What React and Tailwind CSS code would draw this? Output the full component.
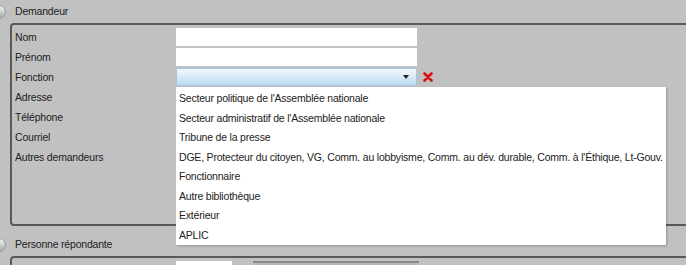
import React from "react";

const labels = ["Nom", "Prénom", "Fonction", "Adresse", "Téléphone", "Courriel", "Autres demandeurs"];

const options = [
    "Secteur politique de l'Assemblée nationale",
    "Secteur administratif de l'Assemblée nationale",
    "Tribune de la presse",
    "DGE, Protecteur du citoyen, VG, Comm. au lobbyisme, Comm. au dév. durable, Comm. à l'Éthique, Lt-Gouv.",
    "Fonctionnaire",
    "Autre bibliothèque",
    "Extérieur",
    "APLIC",
];

const Radio = () => (
    <div className="w-[14px] h-[14px] rounded-full bg-gradient-to-b from-[#f2f2f2] to-[#a8a8a8] border border-[#9a9a9a] -ml-[8px]" />
);

const RedX = () => (
    <svg width="10" height="10" viewBox="0 0 10 10">
        <path d="M1.5 1.5 L8.5 8.5 M8.5 1.5 L1.5 8.5" stroke="#d11" strokeWidth="2.6" strokeLinecap="round" />
    </svg>
);

const App = () => {
    return (
        <div
            className="w-[686px] h-[265px] overflow-hidden bg-[#c1c1c1] relative text-[10.5px] tracking-[-0.2px] text-[#222]"
            style={{ fontFamily: "'Liberation Sans', Arial, sans-serif" }}
        >
            <div className="h-[21px] flex items-center gap-[9px] pt-[2px]">
                <Radio />
                <span>Demandeur</span>
            </div>
            <div className="ml-[10px] mt-[2px] w-[700px] h-[203px] border-2 border-[#595959] rounded-[4px] pt-[2px] pl-[3px]">
                {labels.map((label, i) => (
                    <div key={label} className="h-[20px] flex items-center">
                        <div className="w-[161px] pt-[2px]">{label}</div>
                        {i < 2 && <div className="w-[241px] h-[18px] bg-white" />}
                        {i === 2 && (
                            <div className="flex items-center gap-[6px]">
                                <div className="w-[241px] h-[18px] bg-gradient-to-b from-[#f4f9fd] to-[#bcdaf0] border border-[#a6c8e2] flex items-center justify-end pr-[7px]">
                                    <div className="w-0 h-0 border-l-[3px] border-r-[3px] border-t-[4px] border-l-transparent border-r-transparent border-t-[#222]" />
                                </div>
                                <RedX />
                            </div>
                        )}
                    </div>
                ))}
            </div>
            <div className="h-[30px] flex items-center gap-[9px] pt-[7px]">
                <Radio />
                <span>Personne répondante</span>
            </div>
            <div className="ml-[10px] w-[700px] h-[40px] border-2 border-[#595959] rounded-[4px] pt-[3px] flex">
                <div className="ml-[164px] w-[56px] h-[18px] bg-white" />
                <div className="ml-[21px] w-[166px] h-[18px] bg-[#b5b5b5] border-t-2 border-[#8a8a8a]" />
            </div>

            <div className="absolute left-[176px] top-[87px] w-[490px] h-[158px] bg-white shadow-[1px_1px_2px_rgba(0,0,0,0.25)] pt-[2px]">
                {options.map((o) => (
                    <div key={o} className="h-[19.6px] flex items-center pl-[3px] whitespace-nowrap">
                        {o}
                    </div>
                ))}
            </div>
        </div>
    );
};

export default App;
